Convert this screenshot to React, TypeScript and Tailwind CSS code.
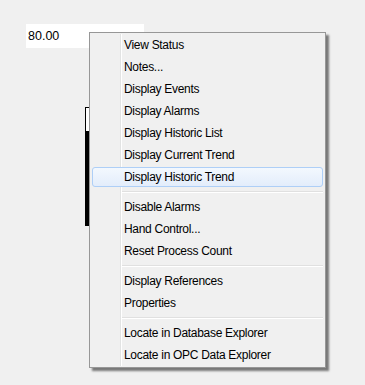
import React from "react";

type Entry = { label: string; active?: boolean } | "sep";

const entries: Entry[] = [
  { label: "View Status" },
  { label: "Notes..." },
  { label: "Display Events" },
  { label: "Display Alarms" },
  { label: "Display Historic List" },
  { label: "Display Current Trend" },
  { label: "Display Historic Trend", active: true },
  "sep",
  { label: "Disable Alarms" },
  { label: "Hand Control..." },
  { label: "Reset Process Count" },
  "sep",
  { label: "Display References" },
  { label: "Properties" },
  "sep",
  { label: "Locate in Database Explorer" },
  { label: "Locate in OPC Data Explorer" },
];

const App = () => {
  return (
    <div
      className="relative h-[385px] w-[365px] overflow-hidden bg-[#f0f0f0] text-black"
      style={{ fontFamily: '"Liberation Sans", Arial, sans-serif' }}
    >
      {/* Value field */}
      <div className="ml-[26px] pt-[24px]">
        <div className="flex h-[24px] w-[118px] items-center bg-white pl-[2px] text-[12.5px] leading-none">
          80.00
        </div>
      </div>

      {/* Level bar (mostly hidden by the menu) */}
      <div className="ml-[85px] mt-[59px] flex h-[119px] w-[20px] flex-col justify-end border border-black bg-white">
        <div className="h-[94px] bg-black" />
      </div>

      {/* Context menu */}
      <div className="absolute left-[89px] top-[32px] w-[237px] border border-[#979797] bg-[#f0f0f0] p-px shadow-[3px_3px_2px_rgba(0,0,0,0.5)]">
        <div className="relative px-px">
          <div className="absolute bottom-0 left-[29px] top-0 w-px bg-[#e2e3e3]" />
          <div className="absolute bottom-0 left-[30px] top-0 w-px bg-white" />
          {entries.map((e, i) =>
            e === "sep" ? (
              <div key={i} className="relative flex h-[8px] flex-col justify-center pl-[30px]">
                <div className="h-px bg-[#e0e0e0]" />
                <div className="h-px bg-white" />
              </div>
            ) : (
              <div key={i} className="relative h-[22px] py-px">
                <div
                  className={
                    e.active
                      ? "flex h-[20px] items-center rounded-[3px] border border-[#aecff7] bg-gradient-to-b from-[#f3f8fe] to-[#e3edfb] pl-[31px] text-[12px] tracking-[-0.3px]"
                      : "flex h-[20px] items-center border border-transparent pl-[31px] text-[12px] tracking-[-0.3px]"
                  }
                >
                  {e.label}
                </div>
              </div>
            )
          )}
        </div>
      </div>
    </div>
  );
};

export default App;
